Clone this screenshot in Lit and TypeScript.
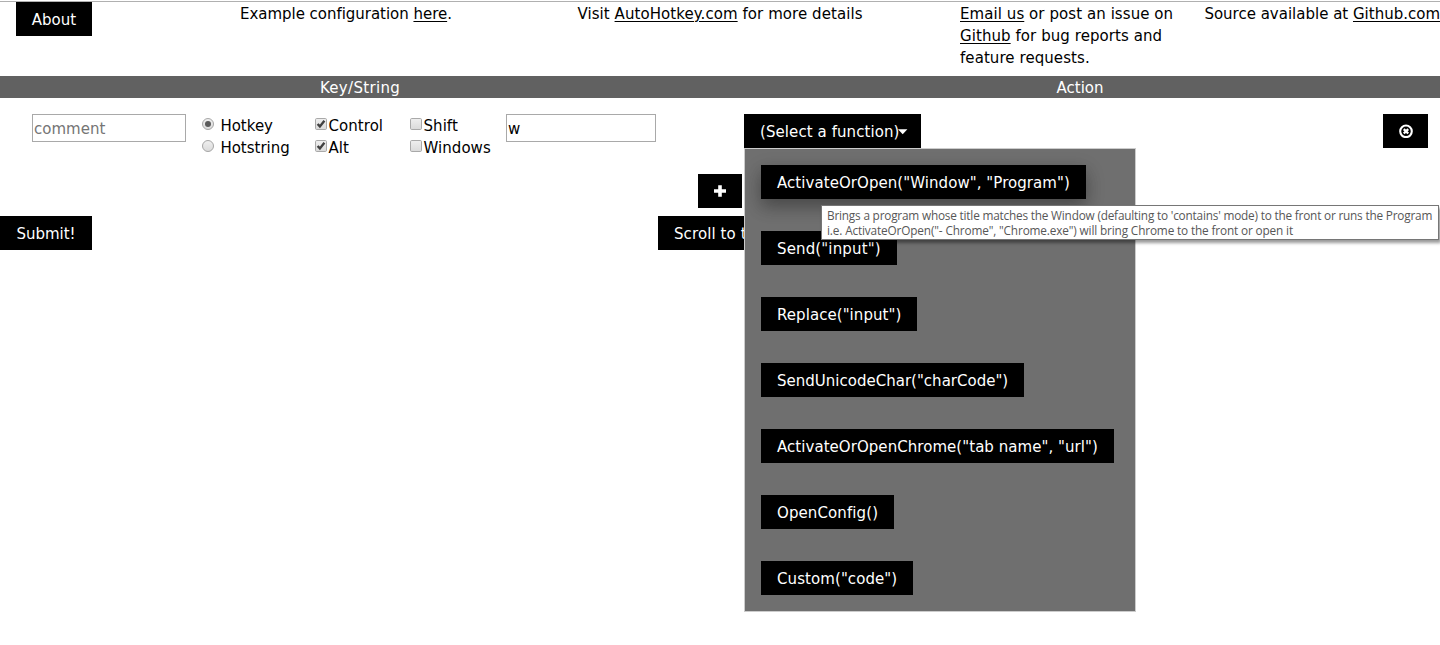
import { LitElement, html, css, svg } from "lit";
import { customElement } from "lit/decorators.js";

const FUNCTIONS = [
  { label: 'ActivateOrOpen("Window", "Program")', width: 325, track: 0.06 },
  { label: 'Send("input")', width: 136, track: 0.14 },
  { label: 'Replace("input")', width: 156, track: 0.06 },
  { label: 'SendUnicodeChar("charCode")', width: 263, track: 0.01 },
  { label: 'ActivateOrOpenChrome("tab name", "url")', width: 353, track: 0.05 },
  { label: "OpenConfig()", width: 133, track: 0.1 },
  { label: 'Custom("code")', width: 152, track: 0.08 },
];

const radio = (on: boolean) => html`<svg class="mark" width="13" height="13" viewBox="0 0 13 13">
  <defs><linearGradient id="rg" x1="0" y1="0" x2="0" y2="1"><stop offset="0" stop-color="#f0f0f0" /><stop offset="1" stop-color="#dadada" /></linearGradient></defs>
  <circle cx="6" cy="6" r="5.5" fill="url(#rg)" stroke="#a6a6a6" />
  ${on ? svg`<circle cx="6" cy="6" r="3" fill="#5a5a5a" />` : ""}
</svg>`;

const check = (on: boolean) => html`<svg class="mark" width="13" height="13" viewBox="0 0 13 13">
  <defs><linearGradient id="cg" x1="0" y1="0" x2="0" y2="1"><stop offset="0" stop-color="#efefef" /><stop offset="1" stop-color="#dadada" /></linearGradient></defs>
  <rect x=".5" y=".5" width="11" height="11" rx="1.2" fill="url(#cg)" stroke="#a9a9a9" />
  ${on ? svg`<path d="M2.6 6L4.9 8.4L9.4 2.8" fill="none" stroke="#404040" stroke-width="2.4" />` : ""}
</svg>`;

@customElement("app-root")
export class AppRoot extends LitElement {
  static styles = css`
    :host {
      display: block;
      height: 645px;
      overflow: hidden;
      background: #fff;
      color: #000;
      font: 15px/22px "DejaVu Sans", sans-serif;
      font-variant-ligatures: none;
      white-space: nowrap;
    }
    * { box-sizing: border-box; }
    a { color: inherit; text-decoration: underline; text-underline-offset: 2px; text-decoration-thickness: 1px; }
    .rule { height: 2px; border-bottom: 1px solid #b0b0b0; }
    .top { display: grid; grid-template-columns: 240px 240px 480px 240px 240px; height: 74px; }
    .top > div { padding-top: 1px; }
    .top > .about { padding: 0 0 0 16px; }
    .center { text-align: center; }
    .loose { letter-spacing: 0.07px; }
    .tight { letter-spacing: -0.03px; }
    .right { text-align: right; }
    .btn {
      display: inline-flex; align-items: center; justify-content: center;
      height: 34px; padding: 2px 0 0; border: 0; background: #000; color: #fff;
      font: inherit; font-variant-ligatures: none; white-space: nowrap; vertical-align: top;
    }
    .btn.icon { padding: 0; }
    .wide { width: 92px; }
    .about .btn { width: 76px; }
    .heads { display: grid; grid-template-columns: 1fr 1fr; height: 22px; line-height: 24px; background: #616161; color: #fff; text-align: center; }
    .keyhead { letter-spacing: 0.32px; }
    .row { display: flex; align-items: flex-start; padding: 16px 12px 0 32px; height: 76px; }
    .field { height: 28px; border: 1px solid #a9a9a9; padding: 1px 1px 0; font: inherit; color: #000; background: #fff; border-radius: 0; margin: 0; outline: 0; }
    .field::placeholder { color: #757575; opacity: 1; }
    .comment { width: 154px; margin-right: 16px; }
    .key { width: 150px; margin-right: 88px; }
    .opts { display: grid; grid-template-rows: 22px 22px; }
    .opt { display: flex; line-height: 24px; }
    .mark { display: block; margin-top: 4px; flex: none; }
    .kind { width: 113px; }
    .kind .opt { gap: 5.4px; }
    .c1 { width: 95px; }
    .c2 { width: 96px; }
    .c1 .opt, .c2 .opt { gap: 0.5px; letter-spacing: 0.05px; }
    .select { position: relative; width: 177px; }
    .select > .btn { width: 177px; justify-content: flex-start; padding-left: 16px; letter-spacing: 0.08px; }
    .caret { margin: 0 0 1px -2px; flex: none; }
    .menu {
      position: absolute; top: 34px; left: 0; width: 392px; height: 464px; z-index: 2;
      display: flex; flex-direction: column; align-items: flex-start; gap: 32px;
      padding: 16px; background: #6f6f6f; border: 1px solid #ccc;
    }
    .menu .btn { flex: none; justify-content: flex-start; padding-left: 16px; }
    .menu .hover { box-shadow: 0 8px 16px 0 rgba(0, 0, 0, 0.2), 0 6px 20px 0 rgba(0, 0, 0, 0.19); }
    .tip {
      position: absolute; top: 91px; left: 77px; width: 618px; height: 35px; z-index: 3;
      padding: 2px 5px; border: 1px solid #767676; background: #fff; color: #575757;
      font: 11.8px/15px "Open Sans", sans-serif; letter-spacing: -0.145px; box-shadow: 2px 3px 3px rgba(0, 0, 0, 0.4);
    }
    .first { letter-spacing: -0.195px; }
    .del { width: 45px; margin-left: auto; }
    .add { display: flex; justify-content: center; height: 42px; }
    .add .btn { width: 44px; }
    .foot { display: grid; grid-template-columns: 658px auto 1fr; }
    .scroll { width: 124px; justify-content: flex-start; padding-left: 16px; letter-spacing: 0.1px; }
  `;

  render() {
    return html`
      <div class="rule"></div>
      <div class="top">
        <div class="about"><button class="btn">About</button></div>
        <div class="tight">Example configuration <a>here</a>.</div>
        <div class="center loose">Visit <a>AutoHotkey.com</a> for more details</div>
        <div class="loose"><a>Email us</a> or post an issue on<br /><a>Github</a> for bug reports and<br />feature requests.</div>
        <div class="right">Source available at <a>Github.com</a></div>
      </div>
      <div class="heads"><div class="keyhead">Key/String</div><div>Action</div></div>
      <div class="row">
        <input class="field comment" placeholder="comment" />
        <div class="opts kind">
          <label class="opt">${radio(true)}<span>Hotkey</span></label>
          <label class="opt">${radio(false)}<span>Hotstring</span></label>
        </div>
        <div class="opts c1">
          <label class="opt">${check(true)}<span>Control</span></label>
          <label class="opt">${check(true)}<span>Alt</span></label>
        </div>
        <div class="opts c2">
          <label class="opt">${check(false)}<span>Shift</span></label>
          <label class="opt">${check(false)}<span>Windows</span></label>
        </div>
        <input class="field key" .value=${"w"} />
        <div class="select">
          <button class="btn"><span>(Select a function)</span><svg class="caret" width="10" height="6" viewBox="0 0 10 6"><path d="M0 .3H9.4L4.7 5.3Z" fill="#fff" /></svg></button>
          <div class="menu">
            ${FUNCTIONS.map((f, i) => html`<button class="btn ${i === 0 ? "hover" : ""}" style="width:${f.width}px;letter-spacing:${f.track}px"><span>${f.label}</span></button>`)}
          </div>
          <div class="tip"><span class="first">Brings a program whose title matches the Window (defaulting to 'contains' mode) to the front or runs the Program</span><br />i.e. ActivateOrOpen("- Chrome", "Chrome.exe") will bring Chrome to the front or open it</div>
        </div>
        <button class="btn icon del"><svg width="14" height="14" viewBox="0 0 14 14"><circle cx="7" cy="7.3" r="5.8" fill="none" stroke="#fff" stroke-width="2.1" /><path d="M4.8 5.1L9.2 9.5M9.2 5.1L4.8 9.5" stroke="#fff" stroke-width="2.4" /></svg></button>
      </div>
      <div class="add"><button class="btn icon"><svg width="12" height="12" viewBox="0 0 12 12"><path d="M6 .2V11.8M0 6H12" stroke="#fff" stroke-width="3.6" /></svg></button></div>
      <div class="foot"><div><button class="btn wide">Submit!</button></div><button class="btn scroll">Scroll to top</button></div>
    `;
  }
}
